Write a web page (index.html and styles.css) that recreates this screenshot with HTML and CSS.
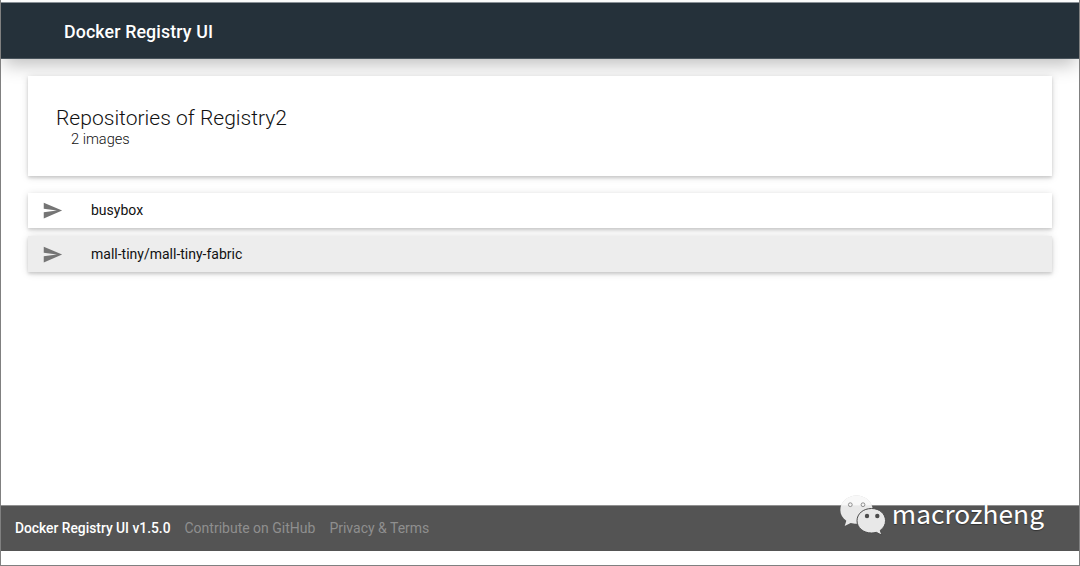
FILE: index.html
```
<!DOCTYPE html>
<html lang="en">
<head>
  <meta charset="UTF-8">
  <title>Docker Registry UI</title>
  <link rel="stylesheet" href="styles.css">
</head>
<body>
<header class="navbar">
  <span class="navbar-title">Docker Registry UI</span>
</header>
<main class="content">
  <section class="card title-card">
    <h2>Repositories of Registry2</h2>
    <div class="item-count">2 images</div>
  </section>
  <ul class="repositories">
    <li class="card repository">
      <svg class="send" viewBox="0 0 24 24"><path d="M2.01 21L23 12 2.01 3 2 10l15 2-15 2z"/></svg>
      <span class="name">busybox</span>
    </li>
    <li class="card repository active">
      <svg class="send" viewBox="0 0 24 24"><path d="M2.01 21L23 12 2.01 3 2 10l15 2-15 2z"/></svg>
      <span class="name">mall-tiny/mall-tiny-fabric</span>
    </li>
  </ul>
</main>
<footer class="footer">
  <span class="version">Docker Registry UI v1.5.0</span>
  <a class="github" href="#">Contribute on GitHub</a>
  <a class="terms" href="#">Privacy &amp; Terms</a>
</footer>
<div class="watermark">
  <svg class="bubbles" viewBox="0 0 48 42">
    <path class="back" d="M16.500 1.500C7.500 1.500.3 8 .3 16c0 4.500 2.200 8.200 6 10.700L4.700 32l6-3c1.700.5 3.400.7 5.800.7 9 0 16.300-5.900 16.300-13.700S25.500 1.500 16.500 1.500z"/>
    <path class="front" d="M31.500 14.500c-8.200 0-14.500 5.300-14.500 12.200s6.300 12.300 14.500 12.300c1.700 0 3.300-.2 4.800-.7l5.500 2.900-1.500-4.900c3.500-2.400 5.200-5.700 5.200-9.600 0-6.900-5.800-12.200-14-12.200z"/>
    <circle class="eye-back" cx="10.300" cy="10.700" r="1.900"/>
    <circle class="eye-back" cx="23" cy="10.700" r="1.900"/>
    <circle class="eye" cx="27" cy="22" r="2.200"/>
    <circle class="eye" cx="37.300" cy="22" r="2.200"/>
  </svg>
  <span class="account">macrozheng</span>
</div>
</body>
</html>
```
FILE: styles.css
```
* {
  box-sizing: border-box;
}

body {
  margin: 0;
  padding-top: 2px;
  height: 566px;
  overflow: hidden;
  display: flex;
  flex-direction: column;
  border: 1px solid #808080;
  border-top: none;
  background-color: #fff;
  color: #111;
  font-family: Roboto, sans-serif;
}

.navbar {
  display: flex;
  align-items: center;
  flex: none;
  height: 57px;
  padding: 1px 63px 0;
  border-top: 1px solid #8a9197;
  border-bottom: 1px solid #49545c;
  background-color: #25313a;
  color: #fff;
  box-shadow: 0 9px 18px -3px rgba(0, 0, 0, 0.25);
}

.navbar-title {
  font-size: 17.8px;
  font-weight: 500;
  letter-spacing: 0.12px;
}

.content {
  flex: 1;
  padding: 17px 27px 0;
}

.card {
  background-color: #fff;
  box-shadow: 0 2px 3px rgba(0, 0, 0, 0.15), 0 1px 8px rgba(0, 0, 0, 0.13);
}

.title-card {
  height: 100px;
  padding: 30px 28px;
}

.title-card h2 {
  margin: 0;
  font-size: 21.05px;
  font-weight: 300;
  line-height: 24px;
}

.item-count {
  margin-left: 15px;
  font-size: 14.6px;
  font-weight: 300;
  line-height: 18px;
}

.repositories {
  display: flex;
  flex-direction: column;
  gap: 8px;
  margin: 17px 0 0;
  padding: 0;
  list-style: none;
}

.repository {
  display: flex;
  align-items: center;
  height: 35px;
  padding-left: 14px;
}

.repository.active {
  height: 36px;
  background-color: #ededed;
}

.send {
  width: 21px;
  height: 21px;
  margin-right: 28px;
  fill: #757575;
}

.name {
  font-size: 14px;
  line-height: 16px;
  padding-bottom: 1px;
}

.footer {
  display: flex;
  align-items: center;
  flex: none;
  gap: 14px;
  height: 46px;
  margin-bottom: 14px;
  padding: 0 14px 2px;
  border-top: 1px solid #919191;
  background-color: #545454;
  color: #fff;
  font-size: 14px;
}

.version {
  font-size: 13.8px;
  font-weight: 500;
}

.footer a {
  color: #8f8f8f;
  text-decoration: none;
}

/* account mark lying over the footer */
.watermark {
  position: absolute;
  right: 36px;
  bottom: 30px;
  display: flex;
  align-items: center;
  color: #fff;
}

.bubbles {
  width: 48px;
  height: 42px;
  margin-right: 4px;
}

.back {
  fill: rgba(255, 255, 255, 0.88);
  filter: drop-shadow(0 0 0.5px rgba(0, 0, 0, 0.25));
}

.front {
  fill: #e8e8e8;
  stroke: #4c4c4c;
  stroke-width: 1;
}

.eye {
  fill: #4c4c4c;
}

.eye-back {
  fill: #f5f5f5;
  stroke: #777;
  stroke-width: 0.8;
}

.account {
  font-family: "Noto Sans CJK SC", sans-serif;
  font-size: 26.3px;
  line-height: 36px;
  padding-bottom: 4px;
  text-shadow: 0 1px 1px rgba(0, 0, 0, 0.4);
}
```
